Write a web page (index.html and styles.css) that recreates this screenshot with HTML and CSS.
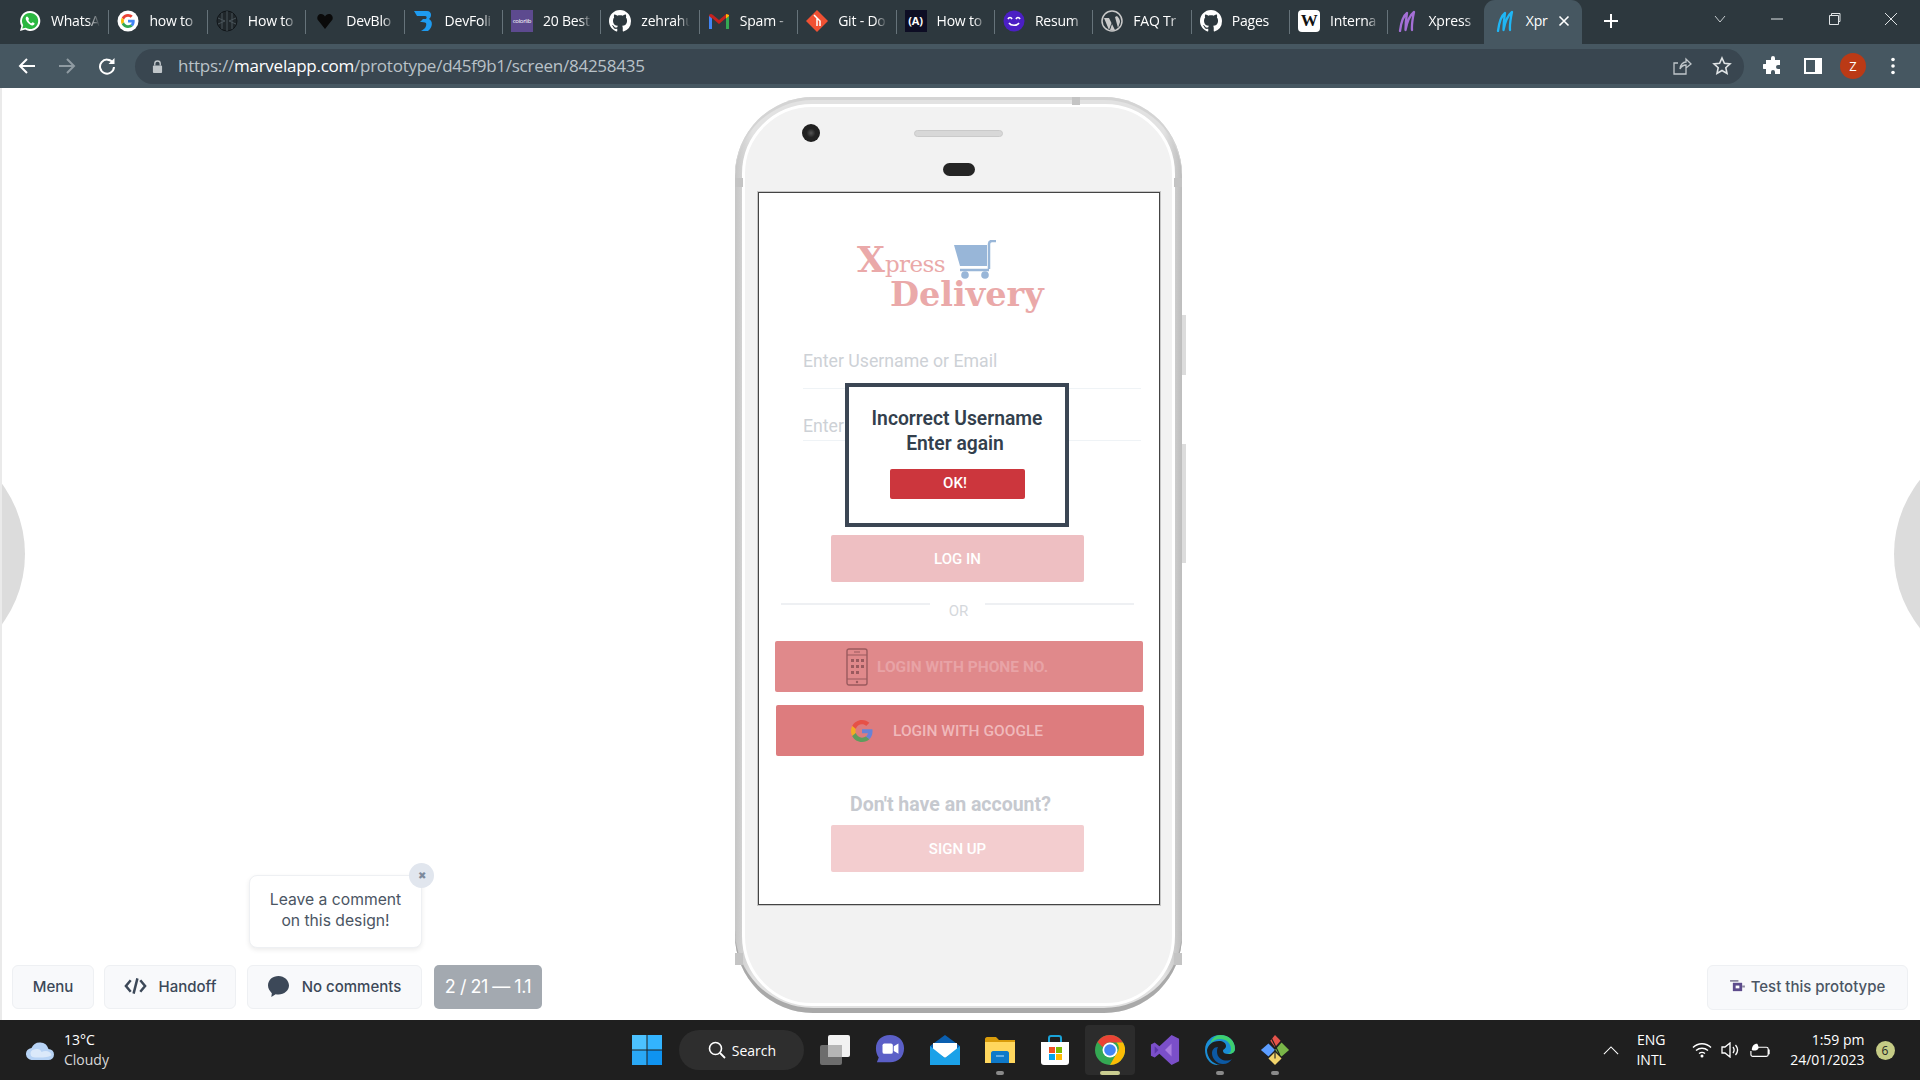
FILE: index.html
```html
<!DOCTYPE html>
<html>
<head>
  <title>Xpress Delivery - Marvel prototype</title>
  <link rel="stylesheet" href="styles.css">
</head>
<body>
  <svg class="defs" width="0" height="0">
    <symbol id="g-logo" viewBox="0 0 48 48">
      <path fill="#EA4335" d="M24 9.5c3.54 0 6.71 1.22 9.21 3.6l6.85-6.85C35.9 2.38 30.47 0 24 0 14.62 0 6.51 5.38 2.56 13.22l7.98 6.19C12.43 13.72 17.74 9.5 24 9.5z"/>
      <path fill="#4285F4" d="M46.98 24.55c0-1.57-.15-3.09-.38-4.55H24v9.02h12.94c-.58 2.96-2.26 5.48-4.78 7.18l7.73 6c4.51-4.18 7.09-10.36 7.09-17.65z"/>
      <path fill="#FBBC05" d="M10.53 28.59c-.48-1.45-.76-2.99-.76-4.59s.27-3.14.76-4.59l-7.98-6.19C.92 16.46 0 20.12 0 24c0 3.88.92 7.54 2.56 10.78l7.97-6.19z"/>
      <path fill="#34A853" d="M24 48c6.48 0 11.93-2.13 16.09-5.81l-7.73-6c-2.15 1.45-4.92 2.3-8.36 2.3-6.26 0-11.57-4.22-13.47-9.91l-7.98 6.19C6.51 42.62 14.62 48 24 48z"/>
    </symbol>
    <symbol id="gh-logo" viewBox="0 0 16 16">
      <path fill="#fff" d="M8 0C3.58 0 0 3.58 0 8c0 3.54 2.29 6.53 5.47 7.59.4.07.55-.17.55-.38 0-.19-.01-.82-.01-1.49-2.01.37-2.53-.49-2.69-.94-.09-.23-.48-.94-.82-1.13-.28-.15-.68-.52-.01-.53.63-.01 1.08.58 1.23.82.72 1.21 1.87.87 2.33.66.07-.52.28-.87.51-1.07-1.78-.2-3.64-.89-3.64-3.95 0-.87.31-1.59.82-2.15-.08-.2-.36-1.02.08-2.12 0 0 .67-.21 2.2.82.64-.18 1.32-.27 2-.27.68 0 1.36.09 2 .27 1.53-1.04 2.2-.82 2.2-.82.44 1.1.16 1.92.08 2.12.51.56.82 1.27.82 2.15 0 3.07-1.87 3.75-3.65 3.95.29.25.54.73.54 1.48 0 1.07-.01 1.93-.01 2.2 0 .21.15.46.55.38A8.013 8.013 0 0016 8c0-4.42-3.58-8-8-8z"/>
    </symbol>
    <symbol id="marvel-logo" viewBox="0 0 20 22">
      <path fill="none" stroke="currentColor" stroke-width="2.300" stroke-linecap="round" stroke-linejoin="round" d="M3 21C4 13 6 6 10 3 9 9 8.500 14 8.500 20 10 12 12 6 17 2 15.500 9 14.500 14 15 20"/>
    </symbol>
  </svg>

  <div class="tab-bar">
    <div class="tab">
      <svg class="fav" viewBox="0 0 22 22"><path fill="#fff" d="M11 1a10 10 0 0 0-8.600 15L1 21l5.200-1.400A10 10 0 1 0 11 1z"/><path fill="#2bb741" d="M11 3a8 8 0 0 0-6.800 12.200l-.9 3.400 3.500-.9A8 8 0 1 0 11 3z"/><path fill="#fff" d="M8 6.500c-.5 0-1.300.7-1.300 2 0 2.500 3.700 6.700 6.600 6.900 1.300 0 2.300-.8 2.300-1.800 0-.5-1.700-1.400-2.100-1.300-.4.200-.7.900-1.100.9-.9 0-3-2.200-3-3 0-.5.700-.7.700-1.200S8.500 6.500 8 6.500z"/></svg>
      <span class="tab-label">WhatsA</span>
    </div>
    <div class="tab">
      <svg class="fav" viewBox="0 0 22 22"><circle cx="11" cy="11" r="10.500" fill="#fff"/><use href="#g-logo" x="4" y="4" width="14" height="14"/></svg>
      <span class="tab-label">how to</span>
    </div>
    <div class="tab">
      <svg class="fav" viewBox="0 0 22 22"><circle cx="11" cy="11" r="10" fill="#20272b" stroke="#11161a"/><path fill="none" stroke="#49545a" d="M11 1v20M6 3v16M16 3v16M2 8l7 3-7 3M20 8l-7 3 7 3"/></svg>
      <span class="tab-label">How to</span>
    </div>
    <div class="tab">
      <svg class="fav" viewBox="0 0 22 22"><path fill="#0a0a0a" d="M11 19L3.500 9.500C2.500 6 5 4 7 4c2 0 3.200 1 4 2.500C11.800 5 13 4 15 4c2 0 4.500 2 3.500 5.500z"/></svg>
      <span class="tab-label">DevBlo</span>
    </div>
    <div class="tab">
      <svg class="fav" viewBox="0 0 22 22"><path fill="#1e9bf0" d="M1 1h13c5 0 5 6 2 8 4 2 4 8-1 12H8c4-2 6-5 5-8-1-1-4-1-6-1l3-3h3c1-1 1-3-1-3H4z"/></svg>
      <span class="tab-label">DevFoli</span>
    </div>
    <div class="tab">
      <div class="fav colorlib">colorlib</div>
      <span class="tab-label">20 Best</span>
    </div>
    <div class="tab">
      <svg class="fav"><use href="#gh-logo"/></svg>
      <span class="tab-label">zehrahu</span>
    </div>
    <div class="tab">
      <svg class="fav" viewBox="0 0 22 22"><path fill="#c5221f" d="M4 8v11H1V6c0-2 2-3 4-1l6 5 6-5c2-2 4-1 4 1v13h-3V8l-7 6z"/><path fill="#4285f4" d="M1 19V6l3 2.500V19z"/><path fill="#34a853" d="M18 19V8.500L21 6v13z"/><path fill="#fbbc05" d="M18 8.500V4l3 1v1z"/></svg>
      <span class="tab-label">Spam -</span>
    </div>
    <div class="tab">
      <svg class="fav" viewBox="0 0 22 22"><path fill="#f05133" d="M11 0l11 11-11 11L0 11z"/><path fill="none" stroke="#fff" stroke-width="1.500" d="M8 5l6 6v5M11 8v8"/></svg>
      <span class="tab-label">Git - Do</span>
    </div>
    <div class="tab">
      <div class="fav av-icon">(A)</div>
      <span class="tab-label">How to</span>
    </div>
    <div class="tab">
      <svg class="fav" viewBox="0 0 22 22"><circle cx="11" cy="11" r="10.500" fill="#4b1fc4"/><path fill="none" stroke="#fff" stroke-width="1.700" d="M5 9c1-2 3-2 4 0M13 9c1-2 3-2 4 0M6 13c2 3 8 3 10 0"/></svg>
      <span class="tab-label">Resum</span>
    </div>
    <div class="tab">
      <svg class="fav" viewBox="0 0 22 22"><circle cx="11" cy="11" r="10" fill="none" stroke="#c9c9c9" stroke-width="1.500"/><path fill="#c9c9c9" d="M3 8l5 12 2.500-7L8 8zM8 6h8l-2 1 3 11 2-6c0-2-1-4-3-6zM11 14l-2 6c2 .500 3 .500 5 0z"/></svg>
      <span class="tab-label">FAQ Tr</span>
    </div>
    <div class="tab">
      <svg class="fav"><use href="#gh-logo"/></svg>
      <span class="tab-label">Pages</span>
    </div>
    <div class="tab">
      <div class="fav wiki-icon">W</div>
      <span class="tab-label">Interna</span>
    </div>
    <div class="tab">
      <svg class="fav marvel-purple"><use href="#marvel-logo"/></svg>
      <span class="tab-label">Xpress</span>
    </div>
    <div class="tab tab-active">
      <svg class="fav marvel-blue"><use href="#marvel-logo"/></svg>
      <span class="tab-label">Xpr</span>
      <svg class="tab-close" viewBox="0 0 12 12"><path stroke="#fff" stroke-width="1.600" d="M1.500 1.500l9 9M10.500 1.500l-9 9"/></svg>
    </div>
    <svg class="new-tab" viewBox="0 0 16 16"><path stroke="#fff" stroke-width="2" d="M8 1v14M1 8h14"/></svg>
    <div class="win-controls">
      <svg class="win-btn" viewBox="0 0 14 14"><path fill="none" stroke="#c5cbce" d="M2 4l5 6 5-6"/></svg>
      <svg class="win-btn" viewBox="0 0 14 14"><path stroke="#dfe3e5" d="M1 7h12"/></svg>
      <svg class="win-btn" viewBox="0 0 14 14"><path fill="none" stroke="#dfe3e5" d="M2.500 3.500h9v9h-9zM4.500 3.500v-2h8.500v8h-1.500"/></svg>
      <svg class="win-btn" viewBox="0 0 14 14"><path stroke="#dfe3e5" d="M1 1l12 12M13 1L1 13"/></svg>
    </div>
  </div>

  <div class="toolbar">
    <svg class="nav-icon" viewBox="0 0 18 18"><path fill="none" stroke="#fff" stroke-width="2" d="M17 9H2M9 2L2 9l7 7"/></svg>
    <svg class="nav-icon" viewBox="0 0 18 18"><path fill="none" stroke="#8f9ba2" stroke-width="2" d="M1 9h15M9 2l7 7-7 7"/></svg>
    <svg class="nav-icon" viewBox="0 0 18 18"><path fill="none" stroke="#fff" stroke-width="2" d="M15 6a7 7 0 1 0 1 4"/><path fill="#fff" d="M16.500 1v6h-6z"/></svg>
    <div class="omnibox">
      <svg class="lock" viewBox="0 0 12 14"><path fill="none" stroke="#c0c6ca" stroke-width="1.500" d="M3 6V4a3 3 0 0 1 6 0v2"/><rect x="1" y="6" width="10" height="8" rx="1" fill="#c0c6ca"/></svg>
      <div class="url">https://<b>marvelapp.com</b>/prototype/d45f9b1/screen/84258435</div>
      <svg class="omni-icon share-icon" viewBox="0 0 20 20"><path fill="none" stroke="#c0c6ca" stroke-width="1.300" d="M14 12v6H2V7h4M8 13c0-4 3-7 6-7V3l5 5-5 4V9c-3 0-5 2-6 4z"/></svg>
      <svg class="omni-icon" viewBox="0 0 20 20"><path fill="none" stroke="#dfe3e5" stroke-width="1.600" d="M10 2l2.400 5.300 5.600.6-4.200 3.800 1.200 5.700-5-2.900-5 2.900 1.200-5.700L2 7.900l5.600-.6z"/></svg>
    </div>
    <div class="tool-icons">
      <svg class="tool-icon" viewBox="0 0 20 20"><path fill="#fff" d="M8 2a2 2 0 0 1 4 0v2h5v5h-2a2 2 0 0 0 0 4h2v5H12v-2a2 2 0 0 0-4 0v2H3v-5H1a2 2 0 0 1 0-5h2V4h5z"/></svg>
      <svg class="tool-icon" viewBox="0 0 20 20"><path fill="none" stroke="#fff" stroke-width="2" d="M2 3h16v14H2z"/><path fill="#fff" d="M12 3h6v14h-6z"/></svg>
      <div class="avatar">Z</div>
      <svg class="tool-icon" viewBox="0 0 20 20"><circle cx="10" cy="3.500" r="1.800" fill="#fff"/><circle cx="10" cy="10" r="1.800" fill="#fff"/><circle cx="10" cy="16.500" r="1.800" fill="#fff"/></svg>
    </div>
  </div>

  <div class="stage">
    <div class="side-blob side-left"></div>
    <div class="side-blob side-right"></div>

    <div class="phone">
      <span class="phone-key key-one"></span>
      <span class="phone-key key-two"></span>
      <span class="band band-top"></span>
      <span class="band band-left"></span>
      <span class="band band-right"></span>
      <span class="band band-left band-low"></span>
      <span class="band band-right band-low"></span>
      <div class="phone-face">
        <div class="phone-top">
          <span class="camera"></span>
          <span class="speaker"></span>
          <span class="sensor"></span>
        </div>

        <div class="screen">
          <div class="logo">
            <div class="logo-top">
              <span class="logo-x">X</span><span class="logo-press">press</span>
              <svg class="cart" viewBox="0 0 42 40"><path fill="#98b6d8" d="M0 5h33v21H6z"/><path fill="none" stroke="#98b6d8" stroke-width="2.500" d="M35 29V4c0-2 1-3 3-3h4M6 30h29"/><circle cx="11" cy="35" r="3.800" fill="#98b6d8"/><circle cx="31" cy="35" r="3.800" fill="#98b6d8"/></svg>
            </div>
            <div class="logo-bottom">Delivery</div>
          </div>

          <div class="field field-user">Enter Username or Email</div>
          <div class="field field-pass">Enter</div>

          <div class="btn btn-login">LOG IN</div>

          <div class="or-row">
            <span class="or-line"></span>
            <span class="or-text">OR</span>
            <span class="or-line"></span>
          </div>

          <div class="btn-wide btn-phone">
            <svg class="phone-icon" viewBox="0 0 22 38"><rect x="1" y="1" width="20" height="36" rx="2" fill="none" stroke="#9a5a5e" stroke-width="1.400"/><path stroke="#9a5a5e" stroke-width="1.200" d="M1 7h20M1 31h20M8 4h6"/><circle cx="11" cy="34" r="1.200" fill="#9a5a5e"/><path fill="#9a5a5e" d="M5 11h3v3H5zM10 11h3v3h-3zM15 11h3v3h-3zM5 17h3v3H5zM10 17h3v3h-3zM15 17h3v3h-3zM5 23h3v3H5zM10 23h3v3h-3z"/></svg>
            <span>LOGIN WITH PHONE NO.</span>
          </div>
          <div class="btn-wide btn-google">
            <svg class="google-icon"><use href="#g-logo"/></svg>
            <span>LOGIN WITH GOOGLE</span>
          </div>

          <div class="no-account">Don't have an account?</div>
          <div class="btn btn-signup">SIGN UP</div>

          <div class="alert-box">
            <div class="alert-text">Incorrect Username<br><span class="alert-line">Enter again</span></div>
            <div class="alert-ok">OK!</div>
          </div>
        </div>
      </div>
    </div>

    <div class="comment-tip">
      Leave a comment<br>on this design!
      <span class="tip-close">&#10006;</span>
    </div>

    <div class="marvel-bar">
      <div class="bar-btn bar-menu">Menu</div>
      <div class="bar-btn bar-handoff">
        <svg class="bar-icon" viewBox="0 0 24 18"><path fill="none" stroke="#3c4858" stroke-width="2.600" d="M7 3L2 9l5 6M17 3l5 6-5 6M14 1l-4 16"/></svg>
        Handoff
      </div>
      <div class="bar-btn bar-comments">
        <svg class="bubble" viewBox="0 0 22 22"><path fill="#3c4858" d="M11 0C5 0 0 4 0 10c0 3 2 6 4 8l-.5 4 4.500-3c1 .2 2 .3 3 .3 6 0 11-4 11-9.300S17 0 11 0z"/></svg>
        No comments
      </div>
      <div class="bar-count">2 / 21 — 1.1</div>
    </div>

    <div class="test-btn">
      <svg class="test-icon" viewBox="0 0 16 14"><path fill="#5d4c8c" d="M3 3h10v9H3z"/><path fill="#fff" d="M6 6h4v3H6z"/><path fill="#8d8aa0" d="M0 0h9v2H0zM13 6h3v2h-3z"/></svg>
      Test this prototype
    </div>
  </div>

  <div class="taskbar">
    <div class="weather">
      <svg class="cloud" viewBox="0 0 30 20"><path fill="#b7d3f5" d="M7 20a6 6 0 0 1-1-12 9 9 0 0 1 17 1 5.500 5.500 0 0 1 0 11z"/><path fill="#e9f2fc" d="M7 17a4 4 0 0 1 0-7c5-2 8-1 9 2 4-2 9-1 10 3-3 3-15 3-19 2z" opacity=".7"/></svg>
      <div class="weather-text">13°C<br><span class="weather-sub">Cloudy</span></div>
    </div>

    <div class="task-center">
      <div class="task-app">
        <svg class="task-icon" viewBox="0 0 30 30"><path fill="#4cc2ff" d="M0 0h14.500v14.500H0z"/><path fill="#33b4ff" d="M15.500 0H30v14.500H15.500z"/><path fill="#2aa8f5" d="M0 15.500h14.500V30H0z"/><path fill="#0f93f0" d="M15.500 15.500H30V30H15.500z"/></svg>
      </div>
      <div class="task-search">
        <svg class="search-icon" viewBox="0 0 18 18"><circle cx="7.500" cy="7.500" r="6" fill="none" stroke="#fff" stroke-width="1.600"/><path stroke="#fff" stroke-width="1.800" d="M12 12l5 5"/></svg>
        Search
      </div>
      <div class="task-app">
        <svg class="task-icon" viewBox="0 0 30 30"><rect x="0" y="10" width="22" height="20" rx="2" fill="#6d6d6d"/><rect x="8" y="0" width="22" height="22" rx="2" fill="#f2f2f2"/><rect x="8" y="10" width="14" height="12" fill="#b5b5b5"/></svg>
      </div>
      <div class="task-app">
        <svg class="task-icon" viewBox="0 0 30 32"><path fill="#5b5fc7" d="M15 0c9 0 15 6 15 14 0 9-6 15-15 15H1l2-5C1 21 0 18 0 14 0 6 6 0 15 0z"/><rect x="7" y="9" width="11" height="11" rx="2" fill="#fff"/><path fill="#fff" d="M19 12l5-3v11l-5-3z"/></svg>
      </div>
      <div class="task-app">
        <svg class="task-icon" viewBox="0 0 30 30"><path fill="#0a5fb0" d="M15 0l15 11v4H0v-4z"/><path fill="#fff" d="M3 8h24v8l-12 7-12-7z"/><path fill="#1ba1e8" d="M0 11l15 12 15-12v19H0z"/></svg>
      </div>
      <div class="task-app task-open">
        <svg class="task-icon" viewBox="0 0 30 30"><path fill="#d99c0b" d="M0 4c0-1 1-2 2-2h9l3 3h16v6H0z"/><path fill="#ffd75e" d="M0 7h30v21H0z"/><path fill="#0f79c9" d="M6 18c0-1 1-2 2-2h14c1 0 2 1 2 2v10H6z"/><path stroke="#bfe4ff" d="M11 21h8"/></svg>
        <span class="task-dot"></span>
      </div>
      <div class="task-app">
        <svg class="task-icon" viewBox="0 0 30 30"><path fill="#fff" d="M1 7h28v20c0 2-1 3-3 3H4c-2 0-3-1-3-3z"/><path fill="none" stroke="#1aa3d8" stroke-width="2" d="M9 7V3c0-1 1-2 2-2h8c1 0 2 1 2 2v4"/><path fill="#f25022" d="M9 12h6v6H9z"/><path fill="#7fba00" d="M16 12h6v6h-6z"/><path fill="#00a4ef" d="M9 19h6v6H9z"/><path fill="#ffb900" d="M16 19h6v6h-6z"/></svg>
      </div>
      <div class="task-app task-active">
        <svg class="task-icon chrome" viewBox="0 0 30 30"><circle cx="15" cy="15" r="15" fill="#34a853"/><path fill="#ea4335" d="M15 0a15 15 0 0 1 13 7.500H15a7.500 7.500 0 0 0-7 5L2.500 7A15 15 0 0 1 15 0z"/><path fill="#fbbc05" d="M28 7.500A15 15 0 0 1 15 30l6.500-11.500a7.500 7.500 0 0 0 0-11z"/><circle cx="15" cy="15" r="7.500" fill="#fff"/><circle cx="15" cy="15" r="5.800" fill="#4285f4"/></svg>
        <span class="task-dot dot-active"></span>
      </div>
      <div class="task-app">
        <svg class="task-icon" viewBox="0 0 30 32"><path fill="#7b4fc9" d="M22 0l8 4v24l-8 4-13-12-5 4-4-2V10l4-2 5 4z"/><path fill="#a87de0" d="M22 9l-7 7 7 7z"/><path fill="#5b36a8" d="M4 12v8l4-4z"/></svg>
      </div>
      <div class="task-app task-open">
        <svg class="task-icon" viewBox="0 0 30 30"><path fill="#1b8ed6" d="M15 0c9 0 15 6 15 14 0 3-3 5-7 5-3 0-5-1-5-3s3-2 3-5-3-5-7-5C7 6 3 10 2 15 2 23 8 29 15 30 6 31 0 24 0 15 0 6 7 0 15 0z"/><path fill="#3ecf6f" d="M15 0c9 0 15 6 15 14 0 3-3 5-7 5 2-1 3-2 3-5 0-6-5-10-11-10-4 0-8 2-10 5C7 3 11 0 15 0z"/><path fill="#0c59a4" d="M13 12c-4 0-6 3-6 6 0 6 5 11 11 11 4 0 7-2 9-5-3 2-8 2-11 0-4-2-5-8-3-12z"/></svg>
        <span class="task-dot"></span>
      </div>
      <div class="task-app task-open">
        <svg class="task-icon" viewBox="0 0 30 32"><path fill="#e5534b" d="M15 0l6 6-6 7-5-7z"/><path fill="#7ab648" d="M22 8l8 8-8 7-7-7z"/><path fill="#5c9dff" d="M8 9l7 7-7 7-8-7z"/><path fill="#f1d36b" d="M15 18l7 7-7 7-7-7z"/><path stroke="#1f1f1f" stroke-width="1.200" d="M11 3l9 18M15 16v9"/></svg>
        <span class="task-dot"></span>
      </div>
    </div>

    <div class="tray">
      <svg class="chevron" viewBox="0 0 18 10"><path fill="none" stroke="#fff" stroke-width="1.200" d="M1 9l8-8 8 8"/></svg>
      <div class="lang">ENG<br>INTL</div>
      <svg class="tray-icon wifi" viewBox="0 0 20 16"><path fill="none" stroke="#fff" stroke-width="1.400" d="M1 5.500c5-5 13-5 18 0M4 8.500c3.500-3 8.500-3 12 0M7 11.500c2-1.500 4-1.500 6 0"/><circle cx="10" cy="14" r="1.500" fill="#fff"/></svg>
      <svg class="tray-icon" viewBox="0 0 20 16"><path fill="none" stroke="#fff" stroke-width="1.300" d="M1 5h3l5-4v14l-5-4H1zM12 5c1.500 2 1.500 4 0 6M14.500 3c2.500 3 2.500 7 0 10"/></svg>
      <svg class="tray-icon" viewBox="0 0 22 16"><path fill="none" stroke="#fff" stroke-width="1.300" d="M7 5h11c1 0 2 1 2 2v6c0 1-1 2-2 2H3c-1 0-2-1-2-2V9M20 8h1v4h-1"/><path fill="#fff" d="M8 1C4 1 2 4 2 8c2 1 5 1 7-1 1-2 0-4-1-6z"/></svg>
      <div class="clock">1:59 pm<br>24/01/2023</div>
      <div class="notif">6</div>
    </div>
  </div>
</body>
</html>
```

FILE: styles.css
```css
* {
  box-sizing: border-box;
}

html, body {
  margin: 0;
  padding: 0;
}

body {
  width: 1920px;
  height: 1080px;
  overflow: hidden;
  display: flex;
  flex-direction: column;
  font-family: 'Open Sans', sans-serif;
  background-color: #fff;
}

.defs {
  position: absolute;
}

/* browser tabs */
.tab-bar {
  height: 44px;
  flex: none;
  display: flex;
  align-items: stretch;
  padding-left: 11px;
  background-color: #2d383e;
}

.tab {
  width: 98.4px;
  height: 44px;
  flex: none;
  display: flex;
  align-items: center;
  padding: 0 0 3px 8px;
  position: relative;
  color: #fff;
  font-size: 14px;
  letter-spacing: -0.2px;
}

.tab::after {
  content: "";
  position: absolute;
  right: 0;
  top: 10px;
  height: 24px;
  width: 1px;
  background-color: #66737a;
}

.tab-active {
  background-color: #465761;
  width: 98px;
  border-radius: 11px 11px 0 0;
  margin-left: -3px;
  padding-left: 10px;
}

.tab-active::after {
  display: none;
}

.tab-active .tab-label {
  width: 24px;
  margin-left: 10px;
  -webkit-mask-image: none;
  mask-image: none;
}

.fav {
  width: 22px;
  height: 22px;
  flex: none;
}

.tab-label {
  width: 49px;
  margin-left: 10px;
  white-space: nowrap;
  -webkit-mask-image: linear-gradient(to right, #000 75%, transparent);
  mask-image: linear-gradient(to right, #000 75%, transparent);
}

.colorlib {
  background-color: #5d4a8f;
  color: #fff;
  font-size: 6px;
  letter-spacing: -0.3px;
  line-height: 22px;
  text-align: center;
  overflow: hidden;
}

.av-icon {
  background-color: #0d0d24;
  color: #fff;
  font-size: 11px;
  font-weight: 700;
  line-height: 22px;
  text-align: center;
}

.wiki-icon {
  background-color: #fff;
  color: #111;
  border-radius: 4px;
  font-family: 'Liberation Serif', serif;
  font-weight: 700;
  font-size: 17px;
  line-height: 22px;
  text-align: center;
}

.marvel-purple {
  color: #a46fd6;
}

.marvel-blue {
  color: #1fb6f5;
}

.tab-close {
  width: 12px;
  height: 12px;
  margin-left: 8px;
  flex: none;
}

.new-tab {
  width: 16px;
  height: 16px;
  margin: 13px 0 0 21px;
}

.win-controls {
  margin-left: auto;
  display: flex;
  padding: 12px 22px 0 0;
  gap: 43px;
  height: 30px;
}

.win-btn {
  width: 14px;
  height: 14px;
}

/* address bar row */
.toolbar {
  height: 44px;
  flex: none;
  display: flex;
  align-items: center;
  padding-left: 18px;
  background-color: #465761;
}

.nav-icon {
  width: 18px;
  height: 18px;
  margin-right: 22px;
  flex: none;
}

.omnibox {
  width: 1609px;
  height: 35px;
  margin: 0 0 0 -3px;
  padding: 0 12px 0 17px;
  display: flex;
  align-items: center;
  border-radius: 18px;
  background-color: #394650;
}

.lock {
  width: 11px;
  height: 13px;
  flex: none;
}

.url {
  margin-left: 15px;
  margin-top: -2px;
  color: #b9c2c8;
  font-size: 17px;
  letter-spacing: -0.25px;
  white-space: nowrap;
}

.url b {
  color: #fff;
  font-weight: 400;
}

.omni-icon {
  width: 20px;
  height: 20px;
  margin-left: 20px;
  flex: none;
}

.share-icon {
  margin-left: auto;
}

.tool-icons {
  display: flex;
  align-items: center;
  margin-left: 19px;
  gap: 20px;
}

.tool-icon {
  width: 20px;
  height: 20px;
}

.avatar {
  width: 26px;
  height: 26px;
  border-radius: 50%;
  margin: 0 -3px;
  background-color: #bb3a16;
  color: #fff;
  font-size: 13px;
  line-height: 26px;
  text-align: center;
}

/* page area */
.stage {
  flex: 1;
  position: relative;
  overflow: hidden;
  display: flex;
  justify-content: center;
  padding: 9px 5px 0 0;
  border-left: 2px solid #eaeaea;
}

.side-blob {
  position: absolute;
  top: 347px;
  width: 238px;
  height: 238px;
  border-radius: 50%;
  background-color: #dcdcdc;
}

.side-left {
  left: -215px;
}

.side-right {
  right: -212px;
}

/* phone mockup */
.phone {
  width: 447px;
  height: 916px;
  flex: none;
  padding: 7px;
  position: relative;
  border-radius: 78px;
  background: linear-gradient(to right, #c6c6c6, #e2e2e2 4%, #e2e2e2 96%, #bdbdbd);
  box-shadow: inset 0 -5px 0 #a9a9a9, inset 0 3px 0 #d4d4d4;
}

.phone-face {
  height: 100%;
  border: 3px solid #fff;
  border-radius: 70px;
  background-color: #f2f2f2;
}

.phone-key {
  position: absolute;
  right: -4px;
  width: 4px;
  background-color: #dcdcdc;
}

.key-one {
  top: 218px;
  height: 60px;
}

.key-two {
  top: 347px;
  height: 119px;
}

.band {
  position: absolute;
  background-color: #c4c4c4;
}

.band-top {
  left: 337px;
  top: 0;
  width: 8px;
  height: 8px;
}

.band-left {
  left: 0;
  top: 81px;
  width: 8px;
  height: 9px;
}

.band-right {
  right: 0;
  top: 81px;
  width: 8px;
  height: 9px;
}

.band-low {
  top: 856px;
  height: 12px;
}

.phone-top {
  height: 85px;
  position: relative;
  display: flex;
  flex-direction: column;
  align-items: center;
}

.camera {
  position: absolute;
  left: 57px;
  top: 17px;
  width: 18px;
  height: 18px;
  border-radius: 50%;
  background: radial-gradient(circle at 50% 50%, #555 0, #222 35%, #1d1d1d 100%);
}

.speaker {
  width: 89px;
  height: 7px;
  margin-top: 23px;
  border-radius: 4px;
  background-color: #d8d8d8;
  border: 1px solid #cacaca;
}

.sensor {
  width: 32px;
  height: 13px;
  margin-top: 26px;
  border-radius: 7px;
  background-color: #252525;
}

.screen {
  width: 402px;
  height: 713px;
  margin-left: 13px;
  position: relative;
  border: 1px solid #444;
  box-shadow: 0 0 0 1px #c6c6c6;
  background-color: #fff;
  font-family: Roboto, sans-serif;
}

/* logo */
.logo {
  height: 100px;
  margin-top: 43px;
  padding-left: 98px;
  font-family: 'DejaVu Serif', serif;
  color: #eaa9a9;
}

.logo-top {
  display: flex;
  align-items: baseline;
  height: 46px;
  line-height: 46px;
}

.logo-x {
  font-size: 36px;
  font-weight: 700;
}

.logo-press {
  font-size: 23px;
  letter-spacing: -0.6px;
}

.cart {
  width: 42px;
  height: 40px;
  margin-left: 9px;
  align-self: flex-start;
  margin-top: 4px;
}

.logo-bottom {
  margin: -11px 0 0 33px;
  font-size: 33.500px;
  font-weight: 700;
  line-height: 48px;
}

/* form */
.field {
  width: 338px;
  margin-left: 44px;
  display: flex;
  align-items: flex-end;
  border-bottom: 1px solid #eff3f6;
  color: #cdd1d6;
  font-size: 17.700px;
}

.field-user {
  padding-bottom: 17px;
  height: 53px;
}

.field-pass {
  padding-bottom: 4px;
  height: 52px;
}

.btn {
  width: 253px;
  height: 47px;
  margin-left: 72px;
  border-radius: 2px;
  color: #fff;
  font-size: 15px;
  font-weight: 500;
  line-height: 49px;
  text-align: center;
}

.btn-login {
  margin-top: 94px;
  background-color: #eebfc2;
}

.or-row {
  width: 353px;
  height: 16px;
  margin: 21px 0 0 22px;
  display: flex;
}

.or-line {
  flex: 1;
  height: 2px;
  background-color: #eef0f3;
}

.or-text {
  width: 55px;
  padding-left: 2px;
  color: #d5d8dc;
  font-size: 15px;
  line-height: 16px;
  text-align: center;
}

.btn-wide {
  width: 368px;
  height: 51px;
  display: flex;
  align-items: center;
  border-radius: 2px;
  font-size: 15.500px;
  font-weight: 500;
}

.btn-phone {
  margin: 22px 0 0 16px;
  padding-left: 71px;
  background-color: #e0898b;
  color: #e8a3a6;
  font-weight: 700;
}

.phone-icon {
  width: 22px;
  height: 38px;
  margin-right: 9px;
}

.btn-google {
  margin: 13px 0 0 17px;
  padding-left: 75px;
  background-color: #dd7c7e;
  color: #f0b9bb;
}

.google-icon {
  width: 22px;
  height: 22px;
  margin-right: 20px;
  opacity: 0.75;
}

.no-account {
  margin: 37px 0 0 91px;
  color: #c6c9cf;
  font-size: 19.500px;
  font-weight: 700;
  line-height: 24px;
}

.btn-signup {
  margin-top: 8px;
  background-color: #f3cdcf;
}

/* alert over the form */
.alert-box {
  position: absolute;
  left: 86px;
  top: 190px;
  width: 224px;
  height: 144px;
  padding-top: 19px;
  border: 4px solid #3b4654;
  background-color: #fff;
  text-align: center;
}

.alert-text {
  color: #333f4d;
  font-size: 19.300px;
  font-weight: 600;
  line-height: 25px;
}

.alert-line {
  position: relative;
  left: -2px;
}

.alert-ok {
  width: 135px;
  height: 30px;
  margin: 13px 0 0 41px;
  padding-right: 5px;
  border-radius: 2px;
  background-color: #cc363d;
  color: #fff;
  font-size: 15px;
  font-weight: 500;
  line-height: 29px;
}

/* marvel overlays */
.comment-tip {
  position: absolute;
  left: 247px;
  top: 787px;
  width: 173px;
  height: 73px;
  padding-top: 13px;
  border: 1px solid #eef0f3;
  border-radius: 8px;
  box-shadow: 0 2px 5px rgba(0, 0, 0, 0.08);
  background-color: #fff;
  color: #4b5563;
  font-family: Inter, sans-serif;
  font-size: 15.700px;
  line-height: 21px;
  text-align: center;
}

.tip-close {
  position: absolute;
  right: -13px;
  top: -13px;
  width: 25px;
  height: 25px;
  border-radius: 50%;
  background-color: #e1e6ee;
  color: #7d8a9c;
  font-size: 10px;
  line-height: 25px;
}

.marvel-bar {
  position: absolute;
  left: 10px;
  top: 877px;
  height: 44px;
  display: flex;
  align-items: stretch;
  color: #3c4858;
  font-family: Inter, sans-serif;
  font-size: 15px;
  font-weight: 500;
}

.bar-btn {
  display: flex;
  align-items: center;
  justify-content: center;
  padding-bottom: 2px;
  border: 1px solid #eef0f3;
  border-radius: 6px;
  background-color: #f8f9fb;
}

.bar-menu {
  width: 82px;
}

.bar-handoff {
  width: 132px;
  margin-left: 10px;
  gap: 12px;
}

.bar-comments {
  width: 175px;
  margin-left: 11px;
  gap: 13px;
}

.bar-icon {
  width: 23px;
  height: 18px;
}

.bubble {
  width: 21px;
  height: 21px;
}

.bar-count {
  width: 108px;
  margin-left: 12px;
  border-radius: 5px;
  background-color: #a3a9b0;
  color: #fff;
  font-size: 18px;
  font-weight: 400;
  letter-spacing: -0.5px;
  line-height: 44px;
  text-align: center;
}

.test-btn {
  position: absolute;
  right: 12px;
  top: 877px;
  width: 201px;
  height: 45px;
  display: flex;
  align-items: center;
  justify-content: center;
  gap: 6px;
  padding-bottom: 2px;
  border: 1px solid #eef0f3;
  border-radius: 6px;
  background-color: #f8f9fb;
  color: #4b5563;
  font-family: Inter, sans-serif;
  font-size: 15px;
  font-weight: 500;
}

.test-icon {
  width: 15px;
  height: 13px;
}

/* windows taskbar */
.taskbar {
  height: 60px;
  flex: none;
  display: grid;
  grid-template-columns: 1fr auto 1fr;
  background-color: #1f1f1f;
  color: #fff;
  font-size: 14px;
}

.weather {
  display: flex;
  align-items: center;
  padding-left: 25px;
}

.cloud {
  width: 31px;
  height: 20px;
}

.weather-text {
  margin-left: 8px;
  line-height: 20px;
}

.weather-sub {
  color: #d8d8d8;
}

.task-center {
  display: flex;
  align-items: center;
  padding-left: 2px;
}

.task-app {
  width: 55px;
  height: 50px;
  display: flex;
  align-items: center;
  justify-content: center;
  position: relative;
  border-radius: 4px;
}

.task-icon {
  width: 30px;
  height: 30px;
}

.task-active {
  background-color: #2c2c2c;
  width: 50px;
  margin: 0 2.5px;
}

.task-dot {
  position: absolute;
  left: 50%;
  bottom: 0;
  width: 8px;
  height: 4px;
  margin-left: -4px;
  border-radius: 2px;
  background-color: #8a8a8a;
}

.dot-active {
  width: 20px;
  margin-left: -10px;
  background-color: #c9cc8f;
}

.task-search {
  width: 125px;
  height: 40px;
  margin: 0 3.5px 0 4px;
  display: flex;
  align-items: center;
  padding-left: 29px;
  gap: 6px;
  border-radius: 20px;
  background-color: #2e2e2e;
}

.search-icon {
  width: 18px;
  height: 18px;
}

.tray {
  display: flex;
  align-items: center;
  justify-content: flex-end;
  padding-right: 25.500px;
}

.chevron {
  width: 16px;
  height: 9px;
  margin-right: 12px;
}

.lang {
  width: 40px;
  margin-right: 21px;
  line-height: 20px;
  text-align: center;
}

.tray-icon {
  width: 20px;
  height: 16px;
  margin-right: 9px;
}

.clock {
  margin-left: 11px;
  line-height: 20px;
  text-align: right;
}

.notif {
  width: 19px;
  height: 19px;
  margin-left: 11px;
  border-radius: 50%;
  background-color: #c5cb85;
  color: #1f1f1f;
  font-size: 12px;
  line-height: 19px;
  text-align: center;
}
```
